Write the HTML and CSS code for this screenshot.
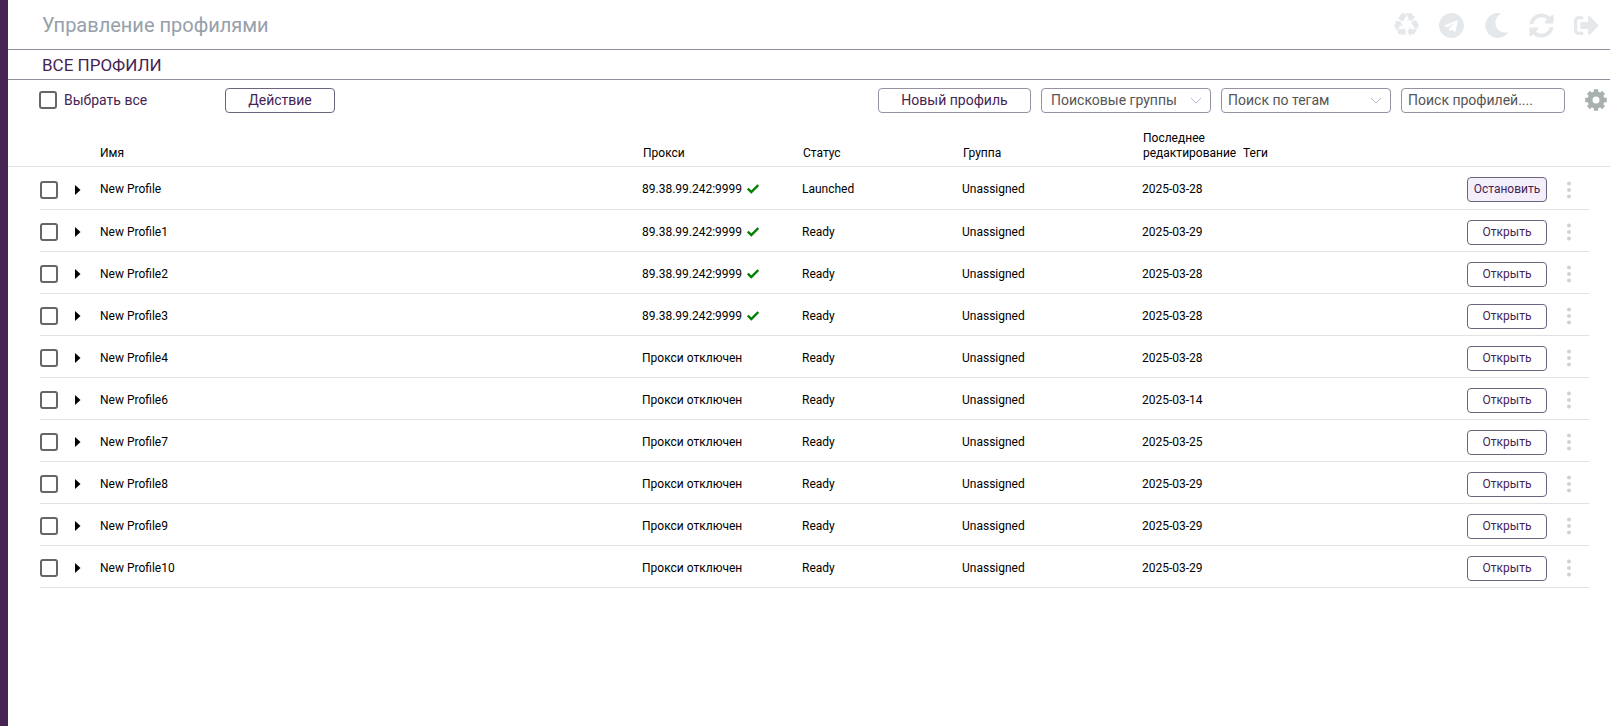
FILE: index.html
```html
<!DOCTYPE html>
<html lang="ru">
<head>
<meta charset="utf-8">
<title>Управление профилями</title>
<link rel="stylesheet" href="styles.css">
</head>
<body>
<svg class="sprite" aria-hidden="true">
  <symbol id="recycle" viewBox="0 0 1792 1792"><path d="M836 1169l-15 368-2 22-420-29q-36-3-67-31.5t-47-65.5q-11-27-14.5-55t4-65 12-55 21.5-64 19-53q78 12 509 28zm-387-586l180 379-147-92q-63 72-111.5 144.5t-72.5 125-39.5 94.5-18.5 63l-4 21-190-357q-17-26-18-56t6-47l8-18q35-63 114-188l-140-86zm1231 517l-188 359q-12 29-36.5 46.5t-43.5 20.5l-18 4q-71 7-219 12l8 164-230-367 211-362 7 173q170 16 283 5t170-33zm-785-924q-47 63-265 435l-317-187-19-12 225-356q20-31 60-45t80-10q24 2 48.5 12t42 21 41.5 33 36 34.5 36 39.5 32 35zm655 307l212 363q18 37 12.5 76t-27.5 74q-13 20-33 37t-38 28-48.5 22-47 16-51.5 14-46 12q-34-72-265-436l313-195zm-143-226l142-83-220 373-419-20 151-86q-34-89-75-166t-75.5-123.5-64.5-80-47-46.5l-17-13 405 1q31-3 58 10.5t39 28.5l11 15q39 61 112 190z"/></symbol>
  <symbol id="telegram" viewBox="0 8 496 496"><path d="M248 8C111 8 0 119 0 256s111 248 248 248 248-111 248-248S385 8 248 8zm121.8 169.9l-40.7 191.8c-3 13.6-11.1 16.9-22.4 10.5l-62-45.7-29.9 28.8c-3.3 3.3-6.1 6.1-12.5 6.1l4.4-63.1 114.9-103.8c5-4.4-1.1-6.900-7.7-2.5l-142 89.400-61.200-19.100c-13.300-4.200-13.600-13.300 2.800-19.700l239.100-92.200c11.100-4 20.800 2.700 17.200 19.500z"/></symbol>
  <symbol id="moon" viewBox="0 0 512 512"><path d="M283.211 512c78.962 0 151.079-35.925 198.857-94.792 7.068-8.708-.639-21.43-11.562-19.35-124.203 23.654-238.262-71.576-238.262-196.954 0-72.222 38.662-138.635 101.498-174.394 9.686-5.512 7.25-20.197-3.756-22.23A258.156 258.156 0 0 0 283.211 0c-141.309 0-256 114.511-256 256 0 141.309 114.511 256 256 256z"/></symbol>
  <symbol id="sync" viewBox="0 0 512 512"><path d="M370.72 133.28C339.458 104.008 298.888 87.962 255.848 88c-77.458.068-144.328 53.178-162.791 126.85-1.344 5.363-6.122 9.15-11.651 9.15H24.103c-7.498 0-13.194-6.807-11.807-14.176C33.933 94.924 134.813 8 256 8c66.448 0 126.791 26.136 171.315 68.685L463.03 40.97C478.149 25.851 504 36.559 504 57.941V192c0 13.255-10.745 24-24 24H345.941c-21.382 0-32.09-25.851-16.971-40.971l41.75-41.749zM32 296h134.059c21.382 0 32.09 25.851 16.971 40.971l-41.75 41.75c31.262 29.273 71.835 45.319 114.876 45.28 77.418-.07 144.315-53.144 162.787-126.849 1.344-5.363 6.122-9.15 11.651-9.15h57.304c7.498 0 13.194 6.807 11.807 14.176C478.067 417.076 377.187 504 256 504c-66.448 0-126.791-26.136-171.315-68.685L48.97 471.03C33.851 486.149 8 475.441 8 454.059V320c0-13.255 10.745-24 24-24z"/></symbol>
  <symbol id="exit" viewBox="0 0 512 512"><path d="M497 273L329 441c-15 15-41 4.5-41-17v-96H152c-13.3 0-24-10.7-24-24v-96c0-13.3 10.7-24 24-24h136V88c0-21.4 25.9-32 41-17l168 168c9.3 9.4 9.3 24.6 0 34zM192 436v-40c0-6.6-5.4-12-12-12H96c-17.7 0-32-14.3-32-32V160c0-17.7 14.3-32 32-32h84c6.6 0 12-5.4 12-12V76c0-6.6-5.4-12-12-12H96c-53 0-96 43-96 96v192c0 53 43 96 96 96h84c6.6 0 12-5.4 12-12z"/></symbol>
  <symbol id="gear" viewBox="0 0 22 22">
    <g fill="none" stroke="currentColor">
      <circle cx="11" cy="11" r="6" stroke-width="5"/>
      <path stroke-width="4.4" d="M11 .2v5M11 16.8v5M.2 11h5M16.8 11h5M3.400 3.400l3 3M15.600 15.600l3 3M18.600 3.400l-3 3M6.400 15.600l-3 3"/>
    </g>
  </symbol>
  <symbol id="check" viewBox="0 0 12 10"><path d="M.8 4.500L4.300 8 11.300 1" fill="none" stroke="currentColor" stroke-width="2.400"/></symbol>
  <symbol id="chevron" viewBox="0 0 12 8"><path d="M1 1l5 5 5-5" fill="none" stroke="currentColor"/></symbol>
  <symbol id="dots" viewBox="0 0 4 18"><circle cx="2" cy="2.500" r="2"/><circle cx="2" cy="9" r="2"/><circle cx="2" cy="15.500" r="2"/></symbol>
  <symbol id="arrow" viewBox="0 0 6 10"><path d="M0 0l5.500 5L0 10z"/></symbol>
</svg>
<div class="app">
  <header class="topbar">
    <h1 class="title">Управление профилями</h1>
    <nav class="tools">
      <button class="icon-btn" aria-label="Корзина"><svg><use href="#recycle"/></svg></button>
      <button class="icon-btn" aria-label="Telegram"><svg><use href="#telegram"/></svg></button>
      <button class="icon-btn" aria-label="Тёмная тема"><svg><use href="#moon"/></svg></button>
      <button class="icon-btn" aria-label="Обновить"><svg><use href="#sync"/></svg></button>
      <button class="icon-btn" aria-label="Выход"><svg><use href="#exit"/></svg></button>
    </nav>
  </header>
  <h2 class="subtitle">ВСЕ ПРОФИЛИ</h2>
  <div class="toolbar">
    <label class="select-all"><input type="checkbox" class="check">Выбрать все</label>
    <button class="btn action">Действие</button>
    <div class="filters">
      <button class="btn create">Новый профиль</button>
      <div class="picker">
        <select class="field wide" aria-label="Поисковые группы"><option>Поисковые группы</option></select>
        <svg class="chevron"><use href="#chevron"/></svg>
      </div>
      <div class="picker">
        <select class="field" aria-label="Поиск по тегам"><option>Поиск по тегам</option></select>
        <svg class="chevron"><use href="#chevron"/></svg>
      </div>
      <input class="field search" type="text" placeholder="Поиск профилей...." aria-label="Поиск профилей">
    </div>
    <button class="gear" aria-label="Настройки"><svg><use href="#gear"/></svg></button>
  </div>
  <table class="profiles">
    <colgroup>
      <col class="c-left"><col class="c-check"><col class="c-arrow"><col><col class="c-mid"><col class="c-mid"><col class="c-group"><col class="c-date"><col class="c-tags"><col class="c-open"><col class="c-menu"><col class="c-right">
    </colgroup>
    <thead>
      <tr><th></th><th></th><th></th><th class="name">Имя</th><th>Прокси</th><th>Статус</th><th>Группа</th><th>Последнее редактирование</th><th>Теги</th><th></th><th></th><th></th></tr>
    </thead>
    <tbody id="rows"></tbody>
  </table>
</div>
<script src="script.js"></script>
</body>
</html>
```
FILE: script.js
```js
const profiles = [
  ["New Profile", true, "Launched", "2025-03-28"],
  ["New Profile1", true, "Ready", "2025-03-29"],
  ["New Profile2", true, "Ready", "2025-03-28"],
  ["New Profile3", true, "Ready", "2025-03-28"],
  ["New Profile4", false, "Ready", "2025-03-28"],
  ["New Profile6", false, "Ready", "2025-03-14"],
  ["New Profile7", false, "Ready", "2025-03-25"],
  ["New Profile8", false, "Ready", "2025-03-29"],
  ["New Profile9", false, "Ready", "2025-03-29"],
  ["New Profile10", false, "Ready", "2025-03-29"]
];

document.getElementById("rows").innerHTML = profiles.map(([name, proxy, status, date]) => {
  const running = status === "Launched";
  return `<tr>
    <td class="edge"></td>
    <td><input type="checkbox" class="check" aria-label="${name}"></td>
    <td><button class="expand" aria-label="Развернуть ${name}"><svg><use href="#arrow"/></svg></button></td>
    <td>${name}</td>
    <td>${proxy ? '89.38.99.242:9999<svg class="ok"><use href="#check"/></svg>' : "Прокси отключен"}</td>
    <td>${status}</td>
    <td>Unassigned</td>
    <td>${date}</td>
    <td></td>
    <td><button class="btn open${running ? " running" : ""}">${running ? "Остановить" : "Открыть"}</button></td>
    <td><button class="menu" aria-label="Меню ${name}"><svg><use href="#dots"/></svg></button></td>
    <td class="edge"></td>
  </tr>`;
}).join("");
```
FILE: styles.css
```css
* { box-sizing: border-box; }

body {
  margin: 0;
  background: #fff;
  color: #000;
  font: 12px/15px Roboto, sans-serif;
}

button, input, select { font: inherit; color: inherit; }
button { padding: 0; border: 0; background: none; cursor: pointer; }
svg { display: block; fill: currentColor; }
.sprite { display: none; }

.app {
  min-height: 100vh;
  border-left: 8px solid #452454;
}

.topbar {
  display: flex;
  align-items: center;
  justify-content: space-between;
  height: 50px;
  padding: 1px 11px 0 34px;
  border-bottom: 1px solid #918d9d;
}

.title {
  margin: 0;
  color: #96a0aa;
  font-size: 20px;
  line-height: 24px;
  font-weight: 400;
}

.tools { display: flex; gap: 20px; color: #e4e8eb; }
.icon-btn svg { width: 25px; height: 25px; }

.subtitle {
  margin: 0;
  padding: 2px 34px 0;
  border-bottom: 1px solid #918d9d;
  color: #452454;
  font-size: 17px;
  line-height: 27px;
  font-weight: 400;
}

.toolbar {
  display: flex;
  align-items: center;
  height: 40px;
  padding: 0 3px 0 31px;
  color: #452454;
  font-size: 14px;
}

.select-all { display: flex; align-items: center; gap: 7px; width: 186px; }

.check {
  appearance: none;
  display: block;
  width: 18px;
  height: 18px;
  margin: 0;
  border: 2px solid #666;
  border-radius: 3px;
  background: #fff;
}

.btn {
  height: 25px;
  border: 1px solid #6c6580;
  border-radius: 4px;
  background: #fff;
  color: #452454;
}

.action { width: 110px; }
.create { width: 153px; border-color: #9691a3; }
.filters { display: flex; gap: 10px; margin-left: auto; }
.picker { position: relative; width: 170px; }

.field {
  appearance: none;
  display: block;
  width: 100%;
  height: 25px;
  padding: 0 6px;
  border: 1px solid #9691a3;
  border-radius: 4px;
  background: #fff;
  color: #555;
}

.field.wide { padding-left: 9px; }
.field.search { width: 164px; }
.field::placeholder { color: #555; opacity: 1; }

.chevron {
  position: absolute;
  top: 9px;
  right: 9px;
  width: 12px;
  height: 8px;
  color: #c3b5d0;
  pointer-events: none;
}

.gear { margin-left: 20px; color: #a9b0b0; }
.gear svg { width: 22px; height: 22px; }

.profiles {
  width: 100%;
  border-collapse: separate;
  border-spacing: 0;
  table-layout: fixed;
}

.c-left { width: 32px; }
.c-check { width: 32px; }
.c-arrow { width: 28px; }
.c-mid { width: 160px; }
.c-group { width: 180px; }
.c-date { width: 100px; }
.c-tags { width: 225px; }
.c-open { width: 80px; }
.c-menu { width: 42px; }
.c-right { width: 21px; }

.profiles th {
  height: 47px;
  padding: 0 0 5px 1px;
  border-bottom: 1px solid #e2e2e4;
  font-weight: 400;
  text-align: left;
  vertical-align: bottom;
}

.profiles th.name { padding-left: 0; }

.profiles td {
  height: 42px;
  padding: 3px 0 0;
  border-bottom: 1px solid #e2e2e4;
  vertical-align: middle;
}

.profiles tr:first-child td { height: 43px; }
.profiles td.edge { border-bottom: 0; }

.expand { display: block; padding: 3px; }
.expand svg { width: 6px; height: 10px; }

.ok {
  display: inline-block;
  width: 12px;
  height: 10px;
  margin-left: 5px;
  vertical-align: -1px;
  color: #008000;
}

.open { display: block; width: 80px; }
.running { background: #f4eefb; }

.menu { display: block; margin-left: 20px; color: #cdd2d5; }
.menu svg { width: 4px; height: 18px; }
```
